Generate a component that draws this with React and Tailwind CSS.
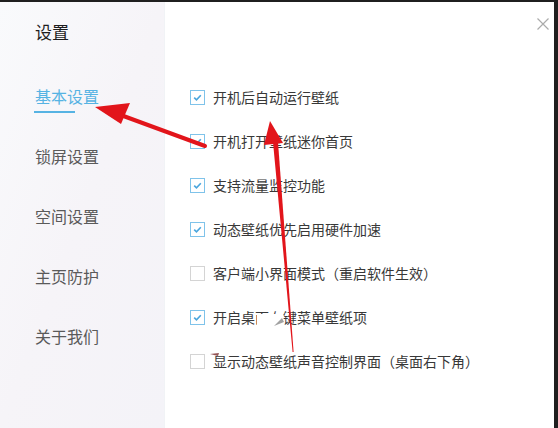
import React from "react";

const items = [
  { label: "开机后自动运行壁纸", checked: true },
  { label: "开机打开壁纸迷你首页", checked: true },
  { label: "支持流量监控功能", checked: true },
  { label: "动态壁纸优先启用硬件加速", checked: true },
  { label: "客户端小界面模式（重启软件生效）", checked: false },
  { label: "开启桌面右键菜单壁纸项", checked: true },
  { label: "显示动态壁纸声音控制界面（桌面右下角）", checked: false },
];

const nav = ["基本设置", "锁屏设置", "空间设置", "主页防护", "关于我们"];

function Box({ checked }) {
  return (
    <span
      className={
        "w-[15px] h-[15px] shrink-0 border bg-white flex items-center justify-center " +
        (checked ? "border-[#7fc3ea]" : "border-[#d4d4d4]")
      }
    >
      {checked && (
        <svg width="11" height="11" viewBox="0 0 11 11">
          <path d="M2.2 5.6 L4.5 7.9 L8.8 3.2" fill="none" stroke="#4ba6dd" strokeWidth="1.6" />
        </svg>
      )}
    </span>
  );
}

export default function App() {
  return (
    <div className="relative w-[558px] h-[428px] bg-[#1f1f1f] pt-[2px] pr-[4px] overflow-hidden font-['Noto_Sans_CJK_SC','Noto_Sans',sans-serif]">
      <div className="relative flex h-full bg-white">
        <aside className="w-[165px] shrink-0 bg-linear-to-br from-[#f9fafc] via-[#f6f4f8] to-[#f4f3f8] border-r border-[#f1f3f6] flex flex-col pl-[35px]">
          <h1 className="mt-[18px] text-[17px] leading-[24px] text-[#1e1e1e]">设置</h1>
          <nav className="mt-[40px] flex flex-col">
            {nav.map((n, i) => (
              <div key={n} className="h-[60px] flex flex-col">
                <span
                  className={
                    "text-[16px] leading-[24px] " + (i === 0 ? "text-[#56b3e3]" : "text-[#5a5a5a]")
                  }
                >
                  {n}
                </span>
                {i === 0 && <span className="mt-[3px] ml-[-1px] w-[41px] h-[2px] bg-[#56b3e3]" />}
              </div>
            ))}
          </nav>
        </aside>
        <main className="flex-1 pl-[25px] pt-[73px] flex flex-col">
          {items.map((it) => (
            <label key={it.label} className="h-[44px] flex items-center gap-[8px]">
              <Box checked={it.checked} />
              <span className="text-[14px] leading-[20px] text-[#383838] whitespace-nowrap">{it.label}</span>
            </label>
          ))}
        </main>
        <button className="absolute right-[5px] top-[16px] w-[12px] h-[12px]">
          <svg width="12" height="12" viewBox="0 0 12 12">
            <path d="M0.5 0.5 L11.5 11.5 M11.5 0.5 L0.5 11.5" stroke="#ababab" strokeWidth="1.2" />
          </svg>
        </button>
      </div>
      <svg className="absolute inset-0 pointer-events-none" width="558" height="428" viewBox="0 0 558 428">
        {/* smudges on text */}
        <rect x="257" y="314" width="26" height="14" fill="#ffffff" />
        <path d="M274 326 L282 318 L284 322 Z" fill="#8a8a8a" opacity="0.8" />
        <path d="M210 354 L219 353 L218 356 Z" fill="#7a2a2a" opacity="0.8" />
        {/* arrow 1 */}
        <line x1="205" y1="146" x2="118" y2="114" stroke="#e2151b" strokeWidth="4" strokeLinecap="round" />
        <polygon points="95,107 130,103 121,124" fill="#e2151b" />
        {/* arrow 2 */}
        <polygon points="273,142 278,142 293.6,352 292.6,352" fill="#e2151b" />
        <polygon points="270,121 264,145 283,143" fill="#e2151b" />
      </svg>
    </div>
  );
}
